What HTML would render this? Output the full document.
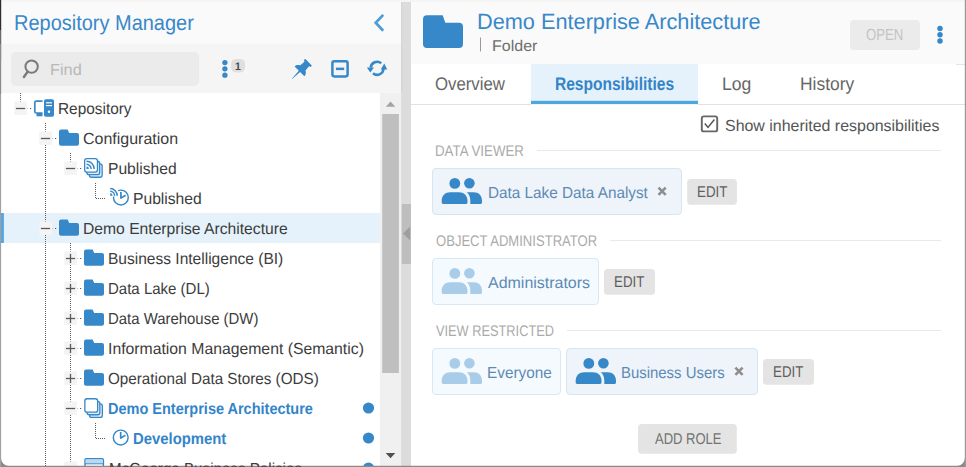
<!DOCTYPE html>
<html><head><meta charset="utf-8"><title>Repository Manager</title>
<style>
html,body{margin:0;padding:0;background:#fff;}
#app{position:relative;width:966px;height:467px;overflow:hidden;background:#fff;font-family:"Liberation Sans",sans-serif;}
#app *{box-sizing:border-box;}
.a{position:absolute;}
.t{position:absolute;white-space:nowrap;line-height:1;transform-origin:0 0;text-rendering:geometricPrecision;}
svg{position:absolute;overflow:visible;}

</style></head>
<body>
<div id="app">
<svg width="966" height="467" viewBox="0 0 966 467" style="left:0;top:0">
<rect x="0" y="0" width="966" height="467" fill="#fff"/>
<rect x="0" y="0" width="966" height="2" fill="#f5f5f5"/>
<rect x="1" y="2" width="400" height="42" fill="#fafafa"/>
<rect x="1" y="44" width="400" height="49" fill="#f5f5f5"/>
<rect x="411" y="2" width="554" height="62" fill="#fafafa"/>
<rect x="956" y="64" width="9" height="1" fill="#e4e4e4"/>
<rect x="401" y="2" width="10" height="465" fill="#dcdcdc"/><rect x="401.3" y="2" width="0.9" height="465" fill="#d2d2d2"/>
<rect x="401.5" y="204" width="9.5" height="60" fill="#bebebe"/>
<path d="M402.8 233.4 L410.1 226.7 L410.1 240.2 Z" fill="#9e9e9e"/>
<rect x="380" y="93" width="21.4" height="374" fill="#f0f0f0"/>
<rect x="382.2" y="114" width="16.7" height="259" fill="#bfbfbf"/>
<path d="M385.8 106.8 L395.3 106.8 L390.55 101.4 Z" fill="#a3a3a3"/>
<path d="M385.7 453.1 L395.3 453.1 L390.5 458.3 Z" fill="#505050"/>
<rect x="1" y="213" width="379" height="30" fill="#e5f2fb"/>
<rect x="1" y="213" width="2.9" height="30" fill="#52a7e0"/>
<rect x="11" y="52" width="188" height="34" rx="5" fill="#ebebeb"/>
<rect x="531" y="64" width="167" height="37" fill="#e5f2fb"/>
<rect x="531" y="100.6" width="167" height="0.8" fill="#9fd0f0"/><rect x="531" y="101" width="167" height="3" fill="#4ba7e0"/>
<rect x="411" y="104" width="554" height="1" fill="#e2e2e2"/><rect x="531" y="104" width="167" height="1" fill="#f6f1f0"/>
<rect x="850" y="20" width="70" height="30" rx="4" fill="#ebebeb"/>
<path d="M383.2 14.9 L375.7 22.8 L383.2 30.7" fill="none" stroke="#4c9cd7" stroke-width="2.7"/>
<circle cx="31.6" cy="66.6" r="6.2" fill="none" stroke="#7a7a7a" stroke-width="2"/>
<path d="M27.6 71.8 L23.9 77" stroke="#7a7a7a" stroke-width="2.4" stroke-linecap="round"/>
<circle cx="224.9" cy="62.6" r="2.65" fill="#3688c8"/>
<circle cx="224.9" cy="68.85" r="2.65" fill="#3688c8"/>
<circle cx="224.9" cy="75.15" r="2.65" fill="#3688c8"/>
<rect x="231.1" y="58.9" width="13.9" height="13.6" rx="4.8" fill="#dfdfdf"/>
<path transform="translate(308.6 62.2) rotate(45)" fill="#3688c8" d="M-4.75 0.6 Q-4.75 0 -4.15 0 H4.15 Q4.75 0 4.75 0.6 V1.7 Q4.75 2.3 4.15 2.3 H3.2 L3.6 8 C5.6 9 6.9 10.6 6.9 12.9 H0.95 L0.15 23.6 L-0.15 23.6 L-0.95 12.9 H-6.9 C-6.9 10.6 -5.6 9 -3.6 8 L-3.2 2.3 H-4.15 Q-4.75 2.3 -4.75 1.7 Z"/>
<rect x="332.4" y="61.2" width="15.2" height="15.2" rx="1.8" fill="none" stroke="#3688c8" stroke-width="2.5"/>
<rect x="335.9" y="67.6" width="8.3" height="2.5" fill="#3688c8"/>
<g fill="none" stroke="#3688c8" stroke-width="2.6"><path d="M381.2 63.3 A6.4 6.4 0 0 0 370.7 67.6"/><path d="M373 73.3 A6.4 6.4 0 0 0 383.5 69"/></g>
<path d="M366.9 67.4 L374 67.4 L370.3 72.5 Z" fill="#3688c8"/>
<path d="M380.7 69.5 L387.2 69.5 L384.3 63.6 Z" fill="#3688c8"/>
<path d="M423 19.2 a4 4 0 0 1 4 -4 L442.7 15.2 L445.3 22.7 L459 22.7 a4 4 0 0 1 4 4 L463 43.9 a4 4 0 0 1 -4 4 L427 47.9 a4 4 0 0 1 -4 -4 Z" fill="#3688c8"/>
<rect x="480" y="37.5" width="1" height="14" fill="#999"/>
<circle cx="940" cy="28.6" r="2.75" fill="#3688c8"/>
<circle cx="940" cy="34.85" r="2.75" fill="#3688c8"/>
<circle cx="940" cy="41.1" r="2.75" fill="#3688c8"/>
<path d="M20.5 93 V102" stroke="#5e5e5e" stroke-width="1" stroke-dasharray="1 1" fill="none"/>
<path d="M45.5 123 V467" stroke="#5e5e5e" stroke-width="1" stroke-dasharray="1 1" fill="none"/>
<path d="M70.5 153 V162" stroke="#5e5e5e" stroke-width="1" stroke-dasharray="1 1" fill="none"/>
<path d="M70.5 243 V467" stroke="#5e5e5e" stroke-width="1" stroke-dasharray="1 1" fill="none"/>
<path d="M95.5 183 V198.5 H106" stroke="#5e5e5e" stroke-width="1" stroke-dasharray="1 1" fill="none"/>
<path d="M95.5 423 V438.5 H106" stroke="#5e5e5e" stroke-width="1" stroke-dasharray="1 1" fill="none"/>
<rect x="14.2" y="101.5" width="12.8" height="13.5" fill="#f4f4f4"/>
<rect x="15.9" y="107.85" width="9.2" height="1.3" fill="#5a5a5a"/>
<rect x="27.2" y="108" width="1" height="1" fill="#bdbdbd"/>
<rect x="30" y="108" width="1.2" height="1" fill="#5a5a5a"/>
<rect x="39.2" y="131.5" width="12.8" height="13.5" fill="#f4f4f4"/>
<rect x="40.9" y="137.85" width="9.2" height="1.3" fill="#5a5a5a"/>
<rect x="52.2" y="138" width="1" height="1" fill="#bdbdbd"/>
<rect x="55" y="138" width="1.2" height="1" fill="#5a5a5a"/>
<rect x="64.2" y="161.5" width="12.8" height="13.5" fill="#f4f4f4"/>
<rect x="65.9" y="167.85" width="9.2" height="1.3" fill="#5a5a5a"/>
<rect x="77.2" y="168" width="1" height="1" fill="#bdbdbd"/>
<rect x="80" y="168" width="1.2" height="1" fill="#5a5a5a"/>
<rect x="39.2" y="221.5" width="12.8" height="13.5" fill="#f4f4f4"/>
<rect x="40.9" y="227.85" width="9.2" height="1.3" fill="#5a5a5a"/>
<rect x="52.2" y="228" width="1" height="1" fill="#bdbdbd"/>
<rect x="55" y="228" width="1.2" height="1" fill="#5a5a5a"/>
<rect x="64.2" y="251.5" width="12.8" height="13.5" fill="#f4f4f4"/>
<rect x="65.9" y="257.85" width="9.2" height="1.3" fill="#5a5a5a"/>
<rect x="69.85" y="253.9" width="1.3" height="9.2" fill="#5a5a5a"/>
<rect x="77.2" y="258" width="1" height="1" fill="#bdbdbd"/>
<rect x="80" y="258" width="1.2" height="1" fill="#5a5a5a"/>
<rect x="64.2" y="281.5" width="12.8" height="13.5" fill="#f4f4f4"/>
<rect x="65.9" y="287.85" width="9.2" height="1.3" fill="#5a5a5a"/>
<rect x="69.85" y="283.9" width="1.3" height="9.2" fill="#5a5a5a"/>
<rect x="77.2" y="288" width="1" height="1" fill="#bdbdbd"/>
<rect x="80" y="288" width="1.2" height="1" fill="#5a5a5a"/>
<rect x="64.2" y="311.5" width="12.8" height="13.5" fill="#f4f4f4"/>
<rect x="65.9" y="317.85" width="9.2" height="1.3" fill="#5a5a5a"/>
<rect x="69.85" y="313.9" width="1.3" height="9.2" fill="#5a5a5a"/>
<rect x="77.2" y="318" width="1" height="1" fill="#bdbdbd"/>
<rect x="80" y="318" width="1.2" height="1" fill="#5a5a5a"/>
<rect x="64.2" y="341.5" width="12.8" height="13.5" fill="#f4f4f4"/>
<rect x="65.9" y="347.85" width="9.2" height="1.3" fill="#5a5a5a"/>
<rect x="69.85" y="343.9" width="1.3" height="9.2" fill="#5a5a5a"/>
<rect x="77.2" y="348" width="1" height="1" fill="#bdbdbd"/>
<rect x="80" y="348" width="1.2" height="1" fill="#5a5a5a"/>
<rect x="64.2" y="371.5" width="12.8" height="13.5" fill="#f4f4f4"/>
<rect x="65.9" y="377.85" width="9.2" height="1.3" fill="#5a5a5a"/>
<rect x="69.85" y="373.9" width="1.3" height="9.2" fill="#5a5a5a"/>
<rect x="77.2" y="378" width="1" height="1" fill="#bdbdbd"/>
<rect x="80" y="378" width="1.2" height="1" fill="#5a5a5a"/>
<rect x="64.2" y="401.5" width="12.8" height="13.5" fill="#f4f4f4"/>
<rect x="65.9" y="407.85" width="9.2" height="1.3" fill="#5a5a5a"/>
<rect x="77.2" y="408" width="1" height="1" fill="#bdbdbd"/>
<rect x="80" y="408" width="1.2" height="1" fill="#5a5a5a"/>
<rect x="64.2" y="461.5" width="12.8" height="13.5" fill="#f4f4f4"/>
<rect x="65.9" y="467.85" width="9.2" height="1.3" fill="#5a5a5a"/>
<rect x="77.2" y="468" width="1" height="1" fill="#bdbdbd"/>
<rect x="80" y="468" width="1.2" height="1" fill="#5a5a5a"/>
<path d="M42.5 101.2 L36.4 101.2 a1.6 1.6 0 0 0 -1.6 1.6 L34.8 111.4 a1.6 1.6 0 0 0 1.6 1.6 L42.5 113" fill="none" stroke="#3688c8" stroke-width="1.7"/>
<rect x="36.5" y="113" width="6" height="3.3" fill="#3688c8"/>
<rect x="44" y="99.2" width="10" height="17.6" rx="1.8" fill="#3688c8"/>
<rect x="46" y="102.2" width="6" height="1.2" fill="#fff"/>
<rect x="46" y="105" width="6" height="1.2" fill="#fff"/>
<circle cx="49" cy="111.8" r="1.2" fill="#fff"/>
<path d="M59 131.5 a2 2 0 0 1 2 -2 L67.6 129.5 L69.2 132.9 L77 132.9 a2 2 0 0 1 2 2 L79 143.7 a2 2 0 0 1 -2 2 L61 145.7 a2 2 0 0 1 -2 -2 Z" fill="#3688c8"/>
<path d="M59 221.5 a2 2 0 0 1 2 -2 L67.6 219.5 L69.2 222.9 L77 222.9 a2 2 0 0 1 2 2 L79 233.7 a2 2 0 0 1 -2 2 L61 235.7 a2 2 0 0 1 -2 -2 Z" fill="#3688c8"/>
<path d="M84 251.5 a2 2 0 0 1 2 -2 L92.6 249.5 L94.2 252.9 L102 252.9 a2 2 0 0 1 2 2 L104 263.7 a2 2 0 0 1 -2 2 L86 265.7 a2 2 0 0 1 -2 -2 Z" fill="#3688c8"/>
<path d="M84 281.5 a2 2 0 0 1 2 -2 L92.6 279.5 L94.2 282.9 L102 282.9 a2 2 0 0 1 2 2 L104 293.7 a2 2 0 0 1 -2 2 L86 295.7 a2 2 0 0 1 -2 -2 Z" fill="#3688c8"/>
<path d="M84 311.5 a2 2 0 0 1 2 -2 L92.6 309.5 L94.2 312.9 L102 312.9 a2 2 0 0 1 2 2 L104 323.7 a2 2 0 0 1 -2 2 L86 325.7 a2 2 0 0 1 -2 -2 Z" fill="#3688c8"/>
<path d="M84 341.5 a2 2 0 0 1 2 -2 L92.6 339.5 L94.2 342.9 L102 342.9 a2 2 0 0 1 2 2 L104 353.7 a2 2 0 0 1 -2 2 L86 355.7 a2 2 0 0 1 -2 -2 Z" fill="#3688c8"/>
<path d="M84 371.5 a2 2 0 0 1 2 -2 L92.6 369.5 L94.2 372.9 L102 372.9 a2 2 0 0 1 2 2 L104 383.7 a2 2 0 0 1 -2 2 L86 385.7 a2 2 0 0 1 -2 -2 Z" fill="#3688c8"/>
<rect x="89.35000000000001" y="163.85" width="12.8" height="13.4" rx="2.2" fill="#e2effa" stroke="#3688c8" stroke-width="1.3"/>
<rect x="86.85000000000001" y="161.25" width="12.8" height="13.4" rx="2.2" fill="#e2effa" stroke="#3688c8" stroke-width="1.3"/>
<rect x="84.65" y="158.65" width="12.8" height="13.4" rx="2.2" fill="#fff" stroke="#3688c8" stroke-width="1.3"/>
<path d="M86.5 169 V166.6 A2.4 2.4 0 0 1 88.9 169 Z" fill="#3688c8"/>
<path d="M86.5 164.3 A4.7 4.7 0 0 1 91.2 169" fill="none" stroke="#3688c8" stroke-width="1.5"/>
<path d="M86.5 161.3 A7.7 7.7 0 0 1 94.2 169" fill="none" stroke="#3688c8" stroke-width="1.5"/>
<rect x="89.55000000000001" y="403.95" width="12.8" height="13.4" rx="2.2" fill="#e2effa" stroke="#3688c8" stroke-width="1.3"/>
<rect x="87.05000000000001" y="401.35" width="12.8" height="13.4" rx="2.2" fill="#e2effa" stroke="#3688c8" stroke-width="1.3"/>
<rect x="84.85000000000001" y="398.75" width="12.8" height="13.4" rx="2.2" fill="#fff" stroke="#3688c8" stroke-width="1.3"/>
<circle cx="120.9" cy="197.5" r="7.4" fill="#fff" stroke="#3688c8" stroke-width="1.45"/>
<path d="M120.9 191.9 V198.1 L125.60000000000001 195.2" fill="none" stroke="#3688c8" stroke-width="1.7" stroke-linejoin="round"/>
<path d="M109.7 196.6 V186.29999999999998 A9.6 9.6 0 0 1 119.5 196.6 Z" fill="#fff"/>
<path d="M110.2 195.7 V193.29999999999998 A2.4 2.4 0 0 1 112.60000000000001 195.7 Z" fill="#3688c8"/>
<path d="M110.2 191.29999999999998 A4.4 4.4 0 0 1 114.60000000000001 195.7" fill="none" stroke="#3688c8" stroke-width="1.5"/>
<path d="M110.2 188.6 A7.1 7.1 0 0 1 117.3 195.7" fill="none" stroke="#3688c8" stroke-width="1.5"/>
<circle cx="120.7" cy="437.5" r="7.4" fill="#fff" stroke="#3688c8" stroke-width="1.45"/>
<path d="M120.7 431.9 V438.1 L125.4 435.2" fill="none" stroke="#3688c8" stroke-width="1.7" stroke-linejoin="round"/>
<rect x="85" y="458.7" width="18.4" height="12" rx="1.2" fill="#fff" stroke="#3688c8" stroke-width="1.4"/>
<rect x="85.7" y="459.4" width="17" height="4" fill="#b9d9f1"/>
<rect x="85" y="463.3" width="18.4" height="1" fill="#3688c8"/>
<circle cx="368.5" cy="408" r="5.6" fill="#3688c8"/>
<circle cx="368.5" cy="438" r="5.6" fill="#3688c8"/>
<circle cx="368.5" cy="468" r="5.6" fill="#3688c8"/>
<rect x="701.8" y="116.4" width="15.4" height="15" rx="2" fill="#fff" stroke="#666" stroke-width="1.9"/>
<path d="M704.8 123.6 L708 127.4 L714.4 119.6" fill="none" stroke="#555" stroke-width="1.5"/>
<rect x="537" y="150" width="404" height="1" fill="#e9e9e9"/>
<rect x="610" y="240" width="331" height="1" fill="#e9e9e9"/>
<rect x="567" y="330" width="374" height="1" fill="#e9e9e9"/>
<rect x="432.5" y="168.5" width="249" height="46" rx="3.5" fill="#eef4f9" stroke="#d3e6f6" stroke-width="1"/>
<circle cx="469.4" cy="183.20000000000002" r="5.3" fill="#3688c8"/>
<path d="M466.7 192.3 L473.7 192.3 C478.7 192.3 482.0 195.8 482.0 200.6 L482.0 202.6 a1.3 1.3 0 0 1 -1.3 1.3 L470.3 203.9 L470.3 200.4 C470.3 196.9 469.09999999999997 194.20000000000002 466.7 192.3 Z" fill="#3688c8"/>
<circle cx="454.8" cy="183.4" r="5.4" fill="#3688c8"/>
<path d="M441.7 202.6 L441.7 200.6 C441.7 195.8 445.3 192.3 450.3 192.3 L458.9 192.3 C463.9 192.3 467.5 195.8 467.5 200.6 L467.5 202.6 a1.3 1.3 0 0 1 -1.3 1.3 L443.0 203.9 a1.3 1.3 0 0 1 -1.3 -1.3 Z" fill="#3688c8"/>
<path d="M658.5 187.6 L665.7 194.79999999999998 M665.7 187.6 L658.5 194.79999999999998" stroke="#8e8e8e" stroke-width="2.6" fill="none"/>
<rect x="687.2" y="179" width="49.69999999999993" height="25.80000000000001" rx="3.5" fill="#e4e4e4"/>
<rect x="432.5" y="258.5" width="166" height="46" rx="3.5" fill="#f5fafe" stroke="#d6e9f8" stroke-width="1"/>
<circle cx="469.4" cy="273.2" r="5.3" fill="#a9cde9"/>
<path d="M466.7 282.29999999999995 L473.7 282.29999999999995 C478.7 282.29999999999995 482.0 285.79999999999995 482.0 290.59999999999997 L482.0 292.59999999999997 a1.3 1.3 0 0 1 -1.3 1.3 L470.3 293.9 L470.3 290.4 C470.3 286.9 469.09999999999997 284.2 466.7 282.29999999999995 Z" fill="#a9cde9"/>
<circle cx="454.8" cy="273.4" r="5.4" fill="#a9cde9"/>
<path d="M441.7 292.59999999999997 L441.7 290.59999999999997 C441.7 285.79999999999995 445.3 282.29999999999995 450.3 282.29999999999995 L458.9 282.29999999999995 C463.9 282.29999999999995 467.5 285.79999999999995 467.5 290.59999999999997 L467.5 292.59999999999997 a1.3 1.3 0 0 1 -1.3 1.3 L443.0 293.9 a1.3 1.3 0 0 1 -1.3 -1.3 Z" fill="#a9cde9"/>
<rect x="604" y="269" width="51" height="25.80000000000001" rx="3.5" fill="#e4e4e4"/>
<rect x="432.5" y="348.5" width="128" height="46" rx="3.5" fill="#f5fafe" stroke="#d6e9f8" stroke-width="1"/>
<circle cx="469.4" cy="363.2" r="5.3" fill="#a9cde9"/>
<path d="M466.7 372.29999999999995 L473.7 372.29999999999995 C478.7 372.29999999999995 482.0 375.79999999999995 482.0 380.59999999999997 L482.0 382.59999999999997 a1.3 1.3 0 0 1 -1.3 1.3 L470.3 383.9 L470.3 380.4 C470.3 376.9 469.09999999999997 374.2 466.7 372.29999999999995 Z" fill="#a9cde9"/>
<circle cx="454.8" cy="363.4" r="5.4" fill="#a9cde9"/>
<path d="M441.7 382.59999999999997 L441.7 380.59999999999997 C441.7 375.79999999999995 445.3 372.29999999999995 450.3 372.29999999999995 L458.9 372.29999999999995 C463.9 372.29999999999995 467.5 375.79999999999995 467.5 380.59999999999997 L467.5 382.59999999999997 a1.3 1.3 0 0 1 -1.3 1.3 L443.0 383.9 a1.3 1.3 0 0 1 -1.3 -1.3 Z" fill="#a9cde9"/>
<rect x="566.5" y="348.5" width="191" height="46" rx="3.5" fill="#eef4f9" stroke="#d3e6f6" stroke-width="1"/>
<circle cx="603.4000000000001" cy="363.2" r="5.3" fill="#3688c8"/>
<path d="M600.7 372.29999999999995 L607.7 372.29999999999995 C612.7 372.29999999999995 616.0 375.79999999999995 616.0 380.59999999999997 L616.0 382.59999999999997 a1.3 1.3 0 0 1 -1.3 1.3 L604.3000000000001 383.9 L604.3000000000001 380.4 C604.3000000000001 376.9 603.1 374.2 600.7 372.29999999999995 Z" fill="#3688c8"/>
<circle cx="588.8000000000001" cy="363.4" r="5.4" fill="#3688c8"/>
<path d="M575.7 382.59999999999997 L575.7 380.59999999999997 C575.7 375.79999999999995 579.3000000000001 372.29999999999995 584.3000000000001 372.29999999999995 L592.9000000000001 372.29999999999995 C597.9000000000001 372.29999999999995 601.5 375.79999999999995 601.5 380.59999999999997 L601.5 382.59999999999997 a1.3 1.3 0 0 1 -1.3 1.3 L577.0 383.9 a1.3 1.3 0 0 1 -1.3 -1.3 Z" fill="#3688c8"/>
<path d="M735.4 367.59999999999997 L742.6 374.8 M742.6 367.59999999999997 L735.4 374.8" stroke="#8e8e8e" stroke-width="2.6" fill="none"/>
<rect x="763" y="359" width="51" height="25.80000000000001" rx="3.5" fill="#e4e4e4"/>
<rect x="638.1" y="424" width="98.69999999999993" height="29.80000000000001" rx="3.5" fill="#e4e4e4"/>
<path d="M0 467 V458.3 H1 A7.5 7.5 0 0 0 8.5 465.8 H957.3 A7.5 7.5 0 0 0 964.8 458.3 H966 V467 Z" fill="#8a8a8a"/>
<rect x="0" y="0" width="1.1" height="467" fill="#a0a0a0"/>
<rect x="0" y="0" width="1.1" height="30" fill="#2e2e2e"/>
<rect x="0" y="30" width="1.1" height="14" fill="#6b6b6b"/>
<rect x="0" y="44" width="1.1" height="50" fill="#8c8c8c"/>
<rect x="1.1" y="0" width="0.9" height="60" fill="#000" opacity="0.06"/>
<rect x="964.8" y="0" width="1.2" height="467" fill="#9a9a9a"/>
</svg>
<span class="t" style="left:13.72px;top:13.00px;font-size:21.5px;color:#3888c9;font-weight:400;transform:scaleX(0.9288)">Repository Manager</span>
<span class="t" style="left:50.04px;top:63.00px;font-size:16px;color:#b8b8b8;font-weight:400;transform:scaleX(1.0185)">Find</span>
<span class="t" style="left:234.68px;top:62.00px;font-size:11px;color:#4a4a4a;font-weight:700;transform:scaleX(0.9470)">1</span>
<span class="t" style="left:57.62px;top:102.00px;font-size:16px;color:#3c3c3c;font-weight:400;transform:scaleX(0.9620)">Repository</span>
<span class="t" style="left:82.80px;top:132.00px;font-size:16px;color:#3c3c3c;font-weight:400;transform:scaleX(0.9994)">Configuration</span>
<span class="t" style="left:107.60px;top:162.00px;font-size:16px;color:#3c3c3c;font-weight:400;transform:scaleX(0.9766)">Published</span>
<span class="t" style="left:132.55px;top:192.00px;font-size:16px;color:#3c3c3c;font-weight:400;transform:scaleX(0.9781)">Published</span>
<span class="t" style="left:82.57px;top:222.00px;font-size:16px;color:#3c3c3c;font-weight:400;transform:scaleX(0.9792)">Demo Enterprise Architecture</span>
<span class="t" style="left:107.62px;top:252.00px;font-size:16px;color:#3c3c3c;font-weight:400;transform:scaleX(0.9709)">Business Intelligence (BI)</span>
<span class="t" style="left:107.73px;top:282.00px;font-size:16px;color:#3c3c3c;font-weight:400;transform:scaleX(0.9382)">Data Lake (DL)</span>
<span class="t" style="left:107.74px;top:312.00px;font-size:16px;color:#3c3c3c;font-weight:400;transform:scaleX(0.9327)">Data Warehouse (DW)</span>
<span class="t" style="left:107.95px;top:342.00px;font-size:16px;color:#3c3c3c;font-weight:400;transform:scaleX(0.9854)">Information Management (Semantic)</span>
<span class="t" style="left:107.99px;top:372.00px;font-size:16px;color:#3c3c3c;font-weight:400;transform:scaleX(0.9518)">Operational Data Stores (ODS)</span>
<span class="t" style="left:107.99px;top:402.00px;font-size:16px;color:#3384c8;font-weight:700;transform:scaleX(0.9061)">Demo Enterprise Architecture</span>
<span class="t" style="left:132.79px;top:432.00px;font-size:16px;color:#3384c8;font-weight:700;transform:scaleX(0.9286)">Development</span>
<span class="t" style="left:109.00px;top:462.00px;font-size:16px;color:#3c3c3c;font-weight:400;transform:scaleX(0.9477)">McGeorge Business Policies</span>
<span class="t" style="left:477.29px;top:11.00px;font-size:22px;color:#3888c9;font-weight:400;transform:scaleX(0.9871)">Demo Enterprise Architecture</span>
<span class="t" style="left:492.11px;top:39.00px;font-size:15.5px;color:#6e6e6e;font-weight:400;transform:scaleX(1.0337)">Folder</span>
<span class="t" style="left:866.33px;top:28.00px;font-size:16px;color:#c4c4c4;font-weight:400;transform:scaleX(0.8229)">OPEN</span>
<span class="t" style="left:435.10px;top:75.00px;font-size:18.3px;color:#666;font-weight:400;transform:scaleX(0.9180)">Overview</span>
<span class="t" style="left:554.59px;top:75.00px;font-size:18.3px;color:#3384c8;font-weight:700;transform:scaleX(0.8493)">Responsibilities</span>
<span class="t" style="left:721.71px;top:75.00px;font-size:18.3px;color:#666;font-weight:400;transform:scaleX(0.9597)">Log</span>
<span class="t" style="left:799.69px;top:75.00px;font-size:18.3px;color:#666;font-weight:400;transform:scaleX(0.9524)">History</span>
<span class="t" style="left:725.16px;top:119.00px;font-size:16px;color:#555;font-weight:400;transform:scaleX(0.9962)">Show inherited responsibilities</span>
<span class="t" style="left:435.19px;top:144.00px;font-size:15.4px;color:#aaa;font-weight:400;transform:scaleX(0.8646)">DATA VIEWER</span>
<span class="t" style="left:435.51px;top:234.00px;font-size:15.4px;color:#aaa;font-weight:400;transform:scaleX(0.8489)">OBJECT ADMINISTRATOR</span>
<span class="t" style="left:436.37px;top:324.00px;font-size:15.4px;color:#aaa;font-weight:400;transform:scaleX(0.8313)">VIEW RESTRICTED</span>
<span class="t" style="left:487.65px;top:186.00px;font-size:16px;color:#5d8ab5;font-weight:400;transform:scaleX(0.9561)">Data Lake Data Analyst</span>
<span class="t" style="left:488.26px;top:276.00px;font-size:16px;color:#5d8ab5;font-weight:400;transform:scaleX(0.9979)">Administrators</span>
<span class="t" style="left:487.25px;top:366.00px;font-size:16px;color:#5d8ab5;font-weight:400;transform:scaleX(0.9591)">Everyone</span>
<span class="t" style="left:621.13px;top:366.00px;font-size:16px;color:#5d8ab5;font-weight:400;transform:scaleX(0.9321)">Business Users</span>
<span class="t" style="left:696.58px;top:185.00px;font-size:15.7px;color:#5e5e5e;font-weight:400;transform:scaleX(0.8494)">EDIT</span>
<span class="t" style="left:613.56px;top:275.00px;font-size:15.7px;color:#5e5e5e;font-weight:400;transform:scaleX(0.8494)">EDIT</span>
<span class="t" style="left:772.56px;top:365.00px;font-size:15.7px;color:#5e5e5e;font-weight:400;transform:scaleX(0.8494)">EDIT</span>
<span class="t" style="left:654.74px;top:432.00px;font-size:15.7px;color:#727272;font-weight:400;transform:scaleX(0.8296)">ADD ROLE</span>
</div>
</body></html>
